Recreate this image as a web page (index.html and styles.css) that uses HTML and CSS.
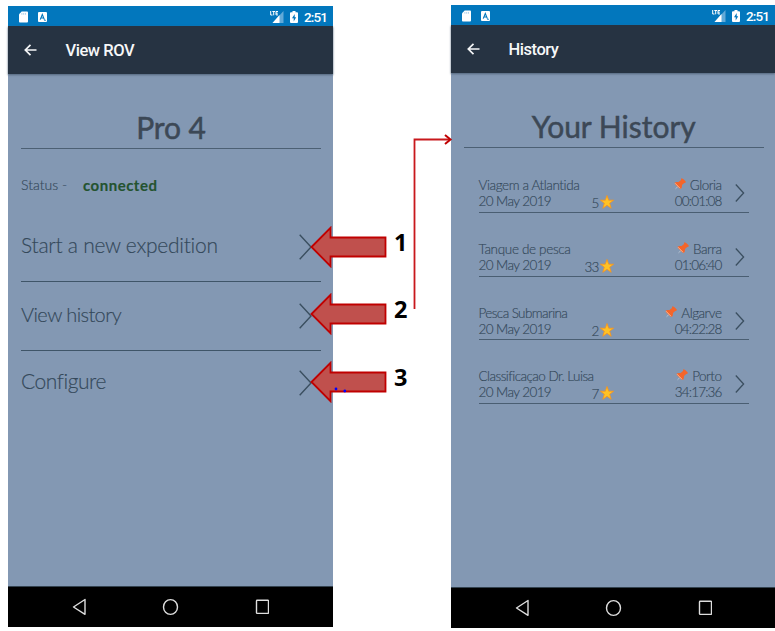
FILE: index.html
```html
<!DOCTYPE html>
<html lang="en">
<head>
<meta charset="utf-8">
<title>View ROV and History</title>
<link rel="stylesheet" href="styles.css">
</head>
<body>
<svg class="defs" width="0" height="0" aria-hidden="true">
  <symbol id="sd" viewBox="0 0 10 12"><path d="M3 0h6q1 0 1 1v10q0 1-1 1H1q-1 0-1-1V3z" fill="#fff"/><path d="M3.2 1.5v2M5.2 1.5v2M7.2 1.5v2" stroke="#a9cfe9"/></symbol>
  <symbol id="a" viewBox="0 0 9 10"><rect width="9" height="10" rx="1" fill="#fff"/><path d="M2.2 7.6 4.3 2.5 6.4 7.6M3 6h2.7M6.2 8.2h1.6" stroke="#0277bd" stroke-width="1.1" fill="none"/></symbol>
  <symbol id="signal" viewBox="0 0 14 12"><path d="M13.5 0v12H2.5z" fill="#62aad8"/><path d="M9.500 4V12h-7z" fill="#fff"/><path d="M.7 0v4h1.800M2.300.5h2.800M3.700.5V4.300M8 .5H6v3.400H8M6 2.200h1.800" stroke="#fff" stroke-width="1" fill="none"/></symbol>
  <symbol id="battery" viewBox="0 0 8 12"><path d="M2.5 0h3v1.3H7q1 0 1 1V11q0 1-1 1H1q-1 0-1-1V2.300q0-1 1-1h1.500z" fill="#fff"/><path d="M4.700 3 2 7.300h1.700V10.500L6.200 6.200H4.700z" fill="#0277bd"/></symbol>
  <symbol id="back" viewBox="0 0 13 12"><path d="M6.500.8 1.300 6l5.200 5.200M1.300 6H12.500" stroke="#f4f6f7" stroke-width="1.700" fill="none"/></symbol>
  <symbol id="chev" viewBox="0 0 13 26"><path d="M.7.7 12 13 .7 25.300" stroke="#3b4f60" stroke-width="1.400" fill="none"/></symbol>
  <symbol id="chevs" viewBox="0 0 10 20"><path d="M.8 1.500 8.600 10 .8 18.500" stroke="#3b4f60" stroke-width="1.300" fill="none"/></symbol>
  <symbol id="star" viewBox="0 0 14 14"><path d="M7 .5 8.700 5.200H13.600L9.700 8.200 11.200 13.300 7 10.300 2.800 13.300 4.300 8.200.4 5.200H5.300z" fill="#ffc225" stroke="#fb9418" stroke-width=".8"/></symbol>
  <symbol id="pin" viewBox="0 0 12 12"><path d="M4.700 7.700 1.500 10.800" stroke="#c3ccd6" stroke-width=".8"/><path d="M7.300.3Q8.500.1 11.700 3.500 12.200 4.700 10.200 4.900L8 7Q8.200 9.600 7 10.800 5.700 11.300 3.400 8.500.400 6 .6 4.800 1.800 3.500 4.600 4.100L7 2z" fill="#f4652a"/><path d="M1 5.200 6 10.300" stroke="#ffc6aa" stroke-width=".8"/></symbol>
  <symbol id="nav" viewBox="0 0 197 18"><g fill="none" stroke="#dedede" stroke-width="1.400"><path d="M13 1.500V16.300L1.500 9z" stroke-linejoin="round"/><ellipse cx="98.500" cy="9" rx="7" ry="7.400"/><rect x="184.500" y="2.200" width="12" height="13.200" rx=".7"/></g></symbol>
  <symbol id="arrow" viewBox="0 0 77 42"><path d="M1.500 21 20.500 1.800V11.500H75.500V30.500H20.500V40.200z" fill="#c0504d" stroke="#c00000" stroke-width="1.800"/></symbol>
</svg>
<main class="stage">
  <section class="phone rov">
    <div class="status"><svg class="sd"><use href="#sd"/></svg><svg class="ia"><use href="#a"/></svg><svg class="signal"><use href="#signal"/></svg><svg class="battery"><use href="#battery"/></svg><span class="clock">2:51</span></div>
    <header class="bar"><svg class="back"><use href="#back"/></svg><span class="bar-title">View ROV</span></header>
    <div class="content">
      <h1 class="title pro">Pro 4</h1>
      <p class="state"><span class="state-label">Status -</span><b class="connected">connected</b></p>
      <div class="action"><span class="start">Start a new expedition</span><svg class="chev"><use href="#chev"/></svg></div>
      <div class="action"><span class="view">View history</span><svg class="chev"><use href="#chev"/></svg></div>
      <div class="action last"><span class="conf">Configure</span><svg class="chev"><use href="#chev"/></svg></div>
    </div>
    <footer class="nav"><svg class="keys"><use href="#nav"/></svg></footer>
  </section>

  <section class="phone history">
    <div class="status"><svg class="sd"><use href="#sd"/></svg><svg class="ia"><use href="#a"/></svg><svg class="signal"><use href="#signal"/></svg><svg class="battery"><use href="#battery"/></svg><span class="clock">2:51</span></div>
    <header class="bar"><svg class="back"><use href="#back"/></svg><span class="bar-title">History</span></header>
    <div class="content">
      <h1 class="title your">Your History</h1>
      <div class="trips">
        <article class="trip"><div class="what"><span class="n1">Viagem a Atlantida</span><span class="date">20 May 2019</span></div><div class="rate">5<svg class="star"><use href="#star"/></svg></div><div class="where"><span class="place"><svg class="pin"><use href="#pin"/></svg>Gloria</span><span class="time">00:01:08</span></div><svg class="chevs"><use href="#chevs"/></svg></article>
        <article class="trip"><div class="what"><span class="n2">Tanque de pesca</span><span class="date">20 May 2019</span></div><div class="rate">33<svg class="star"><use href="#star"/></svg></div><div class="where"><span class="place"><svg class="pin"><use href="#pin"/></svg>Barra</span><span class="time">01:06:40</span></div><svg class="chevs"><use href="#chevs"/></svg></article>
        <article class="trip"><div class="what"><span class="n3">Pesca Submarina</span><span class="date">20 May 2019</span></div><div class="rate">2<svg class="star"><use href="#star"/></svg></div><div class="where"><span class="place"><svg class="pin"><use href="#pin"/></svg>Algarve</span><span class="time">04:22:28</span></div><svg class="chevs"><use href="#chevs"/></svg></article>
        <article class="trip"><div class="what"><span class="n4">Classificaçao Dr. Luisa</span><span class="date">20 May 2019</span></div><div class="rate">7<svg class="star"><use href="#star"/></svg></div><div class="where"><span class="place"><svg class="pin"><use href="#pin"/></svg>Porto</span><span class="time">34:17:36</span></div><svg class="chevs"><use href="#chevs"/></svg></article>
      </div>
    </div>
    <footer class="nav"><svg class="keys"><use href="#nav"/></svg></footer>
  </section>

  <div class="callout c1"><svg class="arrow"><use href="#arrow"/></svg><b>1</b></div>
  <div class="callout c2"><svg class="arrow"><use href="#arrow"/></svg><b>2</b></div>
  <div class="callout c3"><svg class="arrow"><use href="#arrow"/></svg><b>3</b></div>
  <svg class="link" viewBox="0 0 42 180"><path d="M2.500 175V5.500H38" fill="none" stroke="#c8181c" stroke-width="1.800"/><path d="M33 1 38.500 5.500 33 10" fill="none" stroke="#c00000" stroke-width="2"/></svg>
  <svg class="dots" viewBox="0 0 14 6"><circle cx="2" cy="2" r="1.400" fill="#00f"/><circle cx="10.800" cy="4" r="1.400" fill="#00f"/></svg>
</main>
</body>
</html>
```
FILE: styles.css
```css
* { box-sizing: border-box; }
body { margin: 0; background: #fff; overflow: hidden; }
svg { display: block; flex: none; }
.defs { position: absolute; }
.stage { position: relative; width: 775px; height: 631px; display: flex; justify-content: space-between; padding-left: 8px; font-family: Lato, "Liberation Sans", sans-serif; font-weight: 300; font-variant-ligatures: none; color: #34485a; -webkit-text-stroke: .15px; }
.phone { display: flex; flex-direction: column; background: #8398b3; }
.rov { width: 325px; height: 621px; margin-top: 6px; }
.history { width: 324px; height: 623px; margin-top: 5px; }
.status { height: 20px; flex: none; background: #0277bd; display: flex; align-items: center; padding: 1px 7px 0 11px; color: #fff; font: 500 13.5px Roboto, sans-serif; -webkit-text-stroke: 0; }
.sd { width: 9px; height: 12px; }
.ia { width: 9px; height: 10px; margin-left: 10px; }
.signal { width: 14px; height: 12px; margin-left: auto; }
.battery { width: 8px; height: 12px; margin: 0 6px 0 6px; }
.rov .signal { margin-right: 1px; }
.rov .battery { margin-left: 5px; }
.clock { width: 22px; letter-spacing: -.9px; white-space: nowrap; }
.bar { height: 48px; flex: none; background: #263342; display: flex; align-items: center; padding-left: 16px; box-shadow: 0 1px 2px #52657b; color: #f6f7f8; font: 500 16.5px Roboto, sans-serif; -webkit-text-stroke: 0; }
.back { width: 13px; height: 12px; }
.bar-title { margin-left: 28.5px; letter-spacing: -.45px; padding-top: 1px; }
.content { flex: 1; }
.rov .content { padding: 0 12px 0 13px; }
.history .content { padding: 0 11px 0 12.5px; }
.title { margin: 0; height: 75px; padding-top: 32px; border-bottom: 1.5px solid #4c6074; text-align: center; font-size: 30px; line-height: 42px; font-weight: 400; color: #3c4856; white-space: nowrap; -webkit-text-stroke: .5px #3c4856; }
.history .title { height: 74.5px; }
.pro { letter-spacing: -.1px; }
.your { letter-spacing: 0; }
.state { margin: 0; height: 64px; padding-top: 26px; display: flex; font-size: 14px; line-height: 20px; }
.state-label { width: 62px; white-space: nowrap; }
.connected { color: #24532f; font-weight: 700; font-size: 15px; letter-spacing: .5px; }
.action { height: 69px; display: flex; align-items: center; justify-content: space-between; border-bottom: 1px solid #3f5568; font-size: 21px; padding-right: 9px; }
.action span { padding-bottom: 5px; }
.start { letter-spacing: -.27px; }
.view { font-size: 20px; letter-spacing: -.6px; }
.conf { letter-spacing: -.45px; }
.action .chev { width: 13px; height: 26px; }
.action.last { border-bottom: 0; height: 64px; }
.trips { padding: 0 15px; }
.trip { height: 63.7px; display: flex; border-bottom: 1.5px solid #4a5e72; padding-top: 28px; font-size: 13.5px; line-height: 16px; white-space: nowrap; }
.trip:first-child { height: 65.5px; padding-top: 29.5px; }
.what { width: 100px; display: flex; flex-direction: column; }
.n1 { letter-spacing: -.4px; }
.n2 { letter-spacing: -.33px; }
.n3 { letter-spacing: -.6px; }
.n4 { letter-spacing: -.56px; }
.date { letter-spacing: -.6px; }
.rate { width: 35px; display: flex; justify-content: flex-end; padding-top: 18px; letter-spacing: -.8px; }
.star { width: 14px; height: 14px; margin-left: 1px; }
.where { width: 108px; display: flex; flex-direction: column; align-items: flex-end; }
.place { display: flex; letter-spacing: -.5px; }
.time { letter-spacing: -.85px; }
.pin { width: 12px; height: 12px; margin: 1px 4px 0 0; }
.chevs { width: 10px; height: 20px; margin: 6px 0 0 13px; }
.nav { height: 41px; flex: none; background: #000; border-top: 1px solid #33424f; display: flex; align-items: center; }
.keys { width: 197px; height: 18px; margin-left: 64px; }
.callout { position: absolute; left: 310px; display: flex; }
.arrow { width: 77px; height: 42px; }
.callout b { margin-left: 7px; padding-top: 2px; color: #000; font: 700 23.5px/28px "Open Sans", sans-serif; -webkit-text-stroke: 0; }
.c1 { top: 226px; }
.c2 { top: 292.5px; }
.c3 { top: 361px; }
.link { position: absolute; left: 412px; top: 134px; width: 42px; height: 180px; }
.dots { position: absolute; left: 334px; top: 387px; width: 14px; height: 6px; }
```
